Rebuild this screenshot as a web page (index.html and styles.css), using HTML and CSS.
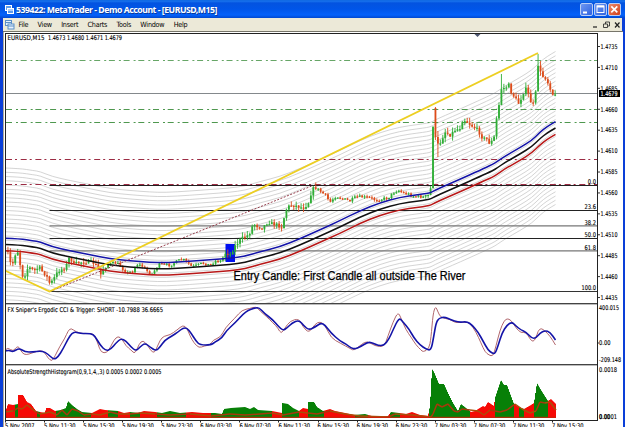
FILE: index.html
```
<!DOCTYPE html>
<html>
<head>
  <meta charset="UTF-8">
  <title>539422: MetaTrader - Demo Account - [EURUSD,M15]</title>
  <link rel="stylesheet" href="styles.css">
</head>
<body>
  <div class="window">
    <div class="titlebar">
      <svg class="app-icon" width="9" height="9" viewBox="0 0 9 9">
        <rect x="0.5" y="0.5" width="6" height="5" fill="#5e9bea" stroke="#fff"/>
        <rect x="2.5" y="3.5" width="6" height="5" fill="#5e9bea" stroke="#fff"/>
        <path d="M2 5h7" stroke="#fff"/>
      </svg>
      <span class="title">539422: MetaTrader - Demo Account - [EURUSD,M15]</span>
      <div class="win-buttons">
        <span class="btn"><svg width="13" height="13"><path d="M3 9.5h4" stroke="#fff" stroke-width="2"/></svg></span>
        <span class="btn"><svg width="13" height="13"><path d="M3 3.5h7" stroke="#fff" stroke-width="2"/><rect x="3" y="3" width="7" height="6.5" fill="none" stroke="#fff"/></svg></span>
        <span class="btn close"><svg width="13" height="13"><path d="M3.3 3.3l6 6M9.3 3.3l-6 6" stroke="#fff" stroke-width="1.7"/></svg></span>
      </div>
    </div>

    <div class="menubar">
      <svg class="doc-icon" width="10" height="10" viewBox="0 0 10 10">
        <rect x="0.5" y="0.5" width="6" height="5" fill="#e8f2ff" stroke="#5b8fc7"/>
        <rect x="3" y="4" width="6" height="5" fill="#e8f2ff" stroke="#5b8fc7"/>
        <path d="M1 2.5h5M3 6h6" stroke="#5b8fc7"/>
      </svg>
      <div class="menu">
        <span>File</span><span>View</span><span>Insert</span><span>Charts</span><span>Tools</span><span>Window</span><span>Help</span>
      </div>
      <svg class="mdi" width="32" height="12" viewBox="0 0 32 12">
        <path d="M3 8h4" stroke="#222" stroke-width="1.2"/>
        <path d="M15.5 5v-2h4v4h-1.500M13.500 5h4v3.500h-4z" stroke="#333" stroke-width="0.9" fill="none"/>
        <path d="M25 3.500l4.500 5M29.500 3.500l-4.500 5" stroke="#222" stroke-width="1.200"/>
      </svg>
    </div>

    <div class="client">
      <svg id="main" class="panel" width="618" height="271" viewBox="5 33 618 271"></svg>
      <svg id="cci" class="panel" width="618" height="61" viewBox="5 304 618 61"></svg>
      <svg id="hist" class="panel" width="618" height="56" viewBox="5 365 618 56"></svg>
      <svg id="times" class="panel" width="618" height="6" viewBox="5 421 618 6"></svg>
    </div>
  </div>
  <script src="chart.js"></script>
</body>
</html>
```
FILE: styles.css
```
body {
  margin: 0;
  background: #fff;
  font-family: "DejaVu Sans Condensed", "DejaVu Sans", sans-serif;
}

.window {
  display: flex;
  flex-direction: column;
  width: 625px;
  height: 427px;
  overflow: hidden;
  background: #0a3fd8;
}

.titlebar {
  display: flex;
  align-items: center;
  height: 18px;
  padding: 1px 4px 0 5px;
  box-sizing: border-box;
  background: linear-gradient(#0a62dc 0, #1a74ee 1px, #0353e0 3px, #0055e8 9px, #0461fa 15px, #0048d0 18px);
}

.title {
  margin-left: 2px;
  margin-top: 1px;
  color: #fff;
  font: bold 8.7px "Noto Sans", sans-serif;
  letter-spacing: -0.47px;
  white-space: nowrap;
  text-shadow: 1px 1px 0 #0a3a9c;
}

.win-buttons {
  display: flex;
  gap: 1px;
  margin-left: auto;
}

.btn {
  width: 11px;
  height: 11px;
  border: 1px solid #b9cdf5;
  border-radius: 2px;
  background: linear-gradient(135deg, #6d97f2, #2e62e0);
}

.btn svg {
  display: block;
  margin: -1px;
}

.close {
  background: linear-gradient(135deg, #ec8b6a, #d2401a);
}

.menubar {
  display: flex;
  align-items: center;
  height: 13px;
  margin: 0 3px 0 3px;
  padding-left: 2px;
  background: #ece9d8;
}

.menu {
  display: flex;
  gap: 9.3px;
  margin-left: 3.5px;
  font-size: 7.2px;
  letter-spacing: -0.25px;
  line-height: 12px;
  color: #000;
}

.mdi {
  margin-left: auto;
}

.client {
  display: flex;
  flex-direction: column;
  margin: 0 2px 0 3px;
  padding-top: 1px;
  padding-left: 2px;
  border-top: 1px solid #77756a;
  box-shadow: inset 1px 0 0 #aca899;
  background: #fff;
}

.panel {
  display: block;
  flex: none;
  overflow: hidden;
}

.small {
  font-size: 6.5px;
  fill: #000;
  stroke: #000;
  stroke-width: 0.12px;
}

.quote {
  fill: #fff;
  stroke: #fff;
}

.note {
  font: 12px "Liberation Sans", sans-serif;
  fill: #000;
  stroke: #000;
  stroke-width: 0.25px;
}
```
FILE: chart.js
```
const NS = "http://www.w3.org/2000/svg";
const main = document.getElementById("main");
const cci = document.getElementById("cci");
const hist = document.getElementById("hist");
const times = document.getElementById("times");

function el(parent, name, attrs, text) {
  const e = document.createElementNS(NS, name);
  for (const k in attrs) e.setAttribute(k, attrs[k]);
  if (text) e.textContent = text;
  parent.appendChild(e);
  return e;
}

function line(p, x1, y1, x2, y2, color, width, dash) {
  el(p, "path", { d: `M${x1} ${y1}L${x2} ${y2}`, stroke: color, "stroke-width": width || 1, "stroke-dasharray": dash || "none", fill: "none" });
}

function rect(p, x, y, w, h, color) {
  el(p, "rect", { x, y, width: w, height: h, fill: color });
}

function label(p, x, y, text, width, cls) {
  el(p, "text", { x, y, class: cls || "small", textLength: width, lengthAdjust: "spacingAndGlyphs" }, text);
}

// "x,y x,y" -> [[x, y], ...]
function pts(s) {
  return s.trim().split(/\s+/).map(p => p.split(",").map(Number));
}

function at(list, x) {
  if (x <= list[0][0]) return list[0][1];
  for (let i = 1; i < list.length; i++) {
    const [x0, y0] = list[i - 1], [x1, y1] = list[i];
    if (x <= x1) return y0 + (y1 - y0) * (x - x0) / (x1 - x0);
  }
  return list[list.length - 1][1];
}

function curve(p, list, dy, color, width) {
  let d = `M${list[0][0]} ${list[0][1] + dy}`;
  for (let i = 1; i < list.length - 1; i++) {
    const mx = (list[i][0] + list[i + 1][0]) / 2;
    const my = (list[i][1] + list[i + 1][1]) / 2 + dy;
    d += `Q${list[i][0]} ${list[i][1] + dy} ${mx} ${my}`;
  }
  const last = list[list.length - 1];
  d += `L${last[0]} ${last[1] + dy}`;
  el(p, "path", { d, stroke: color, "stroke-width": width, fill: "none" });
}

let seed = 7;
function rnd() {
  seed = (seed * 16807) % 2147483647;
  return seed / 2147483647;
}

const STEP = 2.443;

// moving average with its envelope
const ma = pts(`5,244.500 20,245 33,247 40,248 52,253 70,257 90,261 110,265 130,267 150,268.500 165,269 190,267.500
  210,266 230,264.500 245,262.500 260,258 280,253 300,245 320,236 340,227 360,217 380,209 400,203.500 418,201
  427,199.800 431,198.800 435,196.500 445,192 460,185.500 480,176.500 493,170.500 497,168 505,162.500 520,154 532,146.500
  540,138.500 547,133 555.500,128`);

for (let i = -18; i <= 18; i++) {
  if (i) curve(main, ma, i * 4.25, "#c2c2c2", 0.7);
}

// horizontal levels
line(main, 6, 60.500, 597, 60.500, "#67a667", 1, "6 4 2 2.700");
line(main, 6, 109.500, 597, 109.500, "#4f984f", 1, "6 4 2 2.700");
line(main, 6, 122.500, 597, 122.500, "#4f984f", 1, "6 4 2 2.700");
line(main, 6, 159.500, 597, 159.500, "#9c2c44", 1, "6 3 2 3.700");
line(main, 6, 184.500, 597, 184.500, "#9c2c44", 1, "6 3 2 3.700");
line(main, 6, 93.500, 597, 93.500, "#84898c");

const fibs = [["0.0", 185.500, "#222"], ["23.6", 210.500, "#222"], ["38.2", 225.800, "#777"],
  ["50.0", 238.500, "#222"], ["61.8", 250.800, "#777"], ["100.0", 291.500, "#333"]];
fibs.forEach(([name, y, color]) => {
  line(main, 49.500, y, 597, y, color, color === "#777" ? 1.2 : 1);
  const w = name.length * 3.2 - 1.4;
  label(main, 596 - w, y - 1.3, name, w);
});

// price candles
const price = pts(`5,252 8,253 11,265 14,262 16,250 19,253 21,273 24,278 27,269 30,268 33,270 36,270 39,267 42,271
  45,274 47,277 50,284 53,280 57,273 60,270 65,268 68,262 70,255 73,265 77,263 82,262 87,262 92,262 97,266 101,275
  104,268 109,264 115,263 118,264 122,268 127,273 133,271 137,264 142,266 147,271 152,274 157,267 160,264 165,265
  170,265 176,262 182,259 187,262 192,267 198,265 203,263 210,265 215,261 221,261 226,252 230,255 235,246 241,239
  247,236 251,231 253,224 257,226 262,228 268,222 273,224 280,226 282.500,228 285,211 290,205 297,206 303,208 308,204
  312,190 315,187 320,191 325,195 330,202 336,196 343,199 350,201 356,197 362,197 370,198 376,200 382,199 388,198
  393,193 398,190 403,193 408,194 413,196 424,197 429,195 431,187 433.500,127 436,137 438.500,147 441,141 445,132 450,135
  455,130 460,128 463,119 467,122 472,126 478,130 483,139 486,138 490,144 494,138 496,122 499,105 502,85 505,90 508,83
  511,92 515,98 519,104 523,93 526,89 530,98 532,108 535,98 537,82 538.500,58 541,76 545,77 549,85 552,92 554,98 556,94`);

rect(main, 225.500, 244, 9.500, 18, "#0010f0");

// highs and lows of the long candles
const wicks = { 175: [126, 188], 176: [107, 140], 177: [131, 157], 203: [74, 102], 218: [54, 84] };
let prev = price[0][1];
for (let i = 0; i <= 225; i++) {
  const x = 5.500 + i * STEP;
  const calm = x > 105 && x < 225 || x > 325 && x < 425;
  let c = at(price, x) + (rnd() - 0.5) * (calm ? 3 : 3.500);
  if (i === 175) c = 127;
  if (i === 176) {
    prev = 108;
    c = 137;
  }
  const color = c < prev ? "#2fae36" : "#dd4c1a";
  let hi = Math.min(c, prev) - rnd() * (calm ? 2 : 5);
  let lo = Math.max(c, prev) + rnd() * (calm ? 2 : 4.500);
  if (wicks[i]) [hi, lo] = wicks[i];
  line(main, x, hi, x, lo, color, 0.9);
  rect(main, x - 0.9, Math.min(c, prev), 1.8, Math.max(1.2, Math.abs(c - prev)), color);
  prev = c;
}

curve(main, ma, -6.3, "#1414a8", 1.5);
curve(main, ma, 0, "#111", 1.5);
curve(main, ma, 6.3, "#b81818", 1.5);

line(main, 50, 291.500, 313, 185.500, "#8a2a3a", 0.9, "2 1.500");
el(main, "path", { d: "M5 270.500L49.500 291.500L538 53", stroke: "#edcf22", "stroke-width": 1.8, fill: "none" });

el(main, "path", { d: "M474.500 34h6l-3 3z", fill: "#4c5670" });
label(main, 7.500, 40.400, "EURUSD,M15", 37);
label(main, 48, 40.400, "1.4673 1.4680 1.4671 1.4679", 74);
label(main, 233.500, 280, "Entry Candle: First Candle all outside The River", 232, "note");

for (let i = 0; i < 13; i++) {
  const y = 46.500 + i * 20.920;
  line(main, 597, y, 600, y, "#333");
  label(main, 600.500, y + 2.3, (1.4735 - i * 0.0025).toFixed(4), 17);
}
rect(main, 599, 90, 21, 7, "#000");
label(main, 600.500, 95.800, "1.4679", 17, "small quote");

// ergodic CCI
const trigger = pts(`5,351 9,350 13,352 19,348 25,352 33,352 40,351 45,352 50,356 54,359.500 58,357 63,349 68,339 72,333
  76,332 80,333.500 91,333.500 95,336 100,345 106,351 111,349 116,343 121,338.500 126,341 131,347 136,351 140,347 145,343
  150,347 156,351 160,347 165,340 172,336 178,332 183,328 187,328 191,333 196,341 200,345 211,345 215,342 222,338
  226,331 235,323 246,311 255,308 259,307.500 264,313 273,320 278,326 283,330.500 287,328 292,323 299,320 304,326
  309,330 315,327 321,323 325,325 331,333 340,341 346,344 351,348 355,349 360,347 368,342 373,343 378,345.500 384,345.500
  389,339 393,330 399,317.500 403,322 409,329 414,338 420,345 426,349 431,350.500 433.500,338 436,323 439,318 445,317 450,319.500
  459,322.500 467,321.500 472,325 478,332 483,341 488,350 492,353 495,354 498,346 502,333 507,325 512,322 516,326 521,330
  526,332 532,338.500 536,338 540,333 545,330.500 550,332 555.500,340`);
const fast = pts(`5,350 8,347 13,352 18,345 22,353 26,355 32,353 41,350 45,353 48,358 52,361.500 55,356 60,346 65,338 68,331
  71,328 76,332 84,334 91,333 95,336 98,344 101,352.500 107,353 111,346 114,340 118,336 122,339 126,346 131,350 135,354
  139,344 143,340 148,346 153,353.500 156,350 160,340 164,336 170,335 177,330 183,325 187,328 190,336 194,343 199,348
  204,346 210,345 213,340 221,337 225,328 235,318 242,310 250,308.500 256,306.500 260,311 266,316 273,323 278,328
  281,334 285,328 290,321 299,318.500 303,327 309,333 315,324 320,321.500 325,325 331,338 340,343 351,349 354,350.500
  362,344 367,341 375,346 384,347 388,336 393,322 398,312 401,318 406,330 411,337 416,345 421,350 423,352 429,349
  431,338 433,314 435.500,306 438,312 441,318 450,319 455,323 465,322 470,323 476,332 481,343 485,352 489,355 493,356.500
  496,346 500,330 504,321 507,318.500 511,320 516,328 521,333 526,332 530,339 533,342 536,338 538,331 541,328 545,331
  550,336 555.500,345`);
curve(cci, fast, 0, "#a8565c", 0.9);
curve(cci, trigger, 0, "#1414a8", 1.6);
label(cci, 7.500, 311.800, "FX Sniper's Ergodic CCI & Trigger: SHORT -10.7988 36.6665", 155.500);
label(cci, 599, 310.200, "400.015", 20);
label(cci, 599, 345.400, "0.00", 11.500);
label(cci, 599, 362.300, "-209.148", 22);
line(cci, 597, 343, 599, 343, "#333");

// strength histogram
const tops = pts(`5,413 8,404 13,405 18,404 18.500,395 23,395 27,402 31,404 36,411 40,412 45,413 46,408 50,408 55,411
  61,410 66,408 68,401 72,405 77,409 82,412 92,413 100,409 105,410 118,411 124,413 130,412 138,413 144,411 155,412
  162,413 170,411 180,413 192,412 203,413 215,413 222,414 224,409 231,408 245,407 250,409 254,407 258,410 272,411
  282,413 282.500,403 288,404 293,408 299,411 303,408 308,409 308.500,402 314,402 317,407 323,411 330,409 335,411
  345,413 354,415 365,414 375,417 388,416 391,412 399,413 406,414 412,412 420,415 428,416 430,406 432,369 434,372
  439,384 444,384 448,393 453,403 458,411 461,404 466,408 471,412 475,411 483,406 485,407 488,402 494,406 495,398
  501,380 504,385 507,385 511,396 514,404 519,407 524,409 531,405 534,403 537,383 541,390 548,401 551,399 553,401 556,404`);
// [end x, colour]
const runs = [[15, "r"], [18, "g"], [37, "r"], [40, "g"], [56, "r"], [91, "g"], [108, "r"], [118, "g"], [130, "r"],
  [140, "g"], [157, "r"], [186, "g"], [211, "r"], [272, "g"], [281.500, "r"], [299, "g"], [308, "r"], [324, "g"],
  [355, "r"], [368, "g"], [390, "r"], [400, "g"], [429, "r"], [470, "g"], [495, "r"], [514, "g"], [519, "r"],
  [524, "g"], [534, "r"], [547.500, "g"], [560, "r"]];
const base = 418;
for (let x = 5; x < 556; x++) {
  const run = runs.find(r => x < r[0]);
  const y = at(tops, x + 0.5);
  rect(hist, x, y, 1, base - y, run[1] === "r" ? "#f60a05" : "#078007");
}
const weak = pts(`5,412 13,411 18,408 22,409 27,405 31,408 36,412 40,414 50,412 57,415 62,410 67,415 72,409 78,411 84,415
  92,414 100,415 110,412 118,414 130,414 140,413 155,414 170,415 190,414 211,416 230,414 245,415 260,414 272,413
  283,415 299,412 308,413 317,414 330,411 345,414 360,416 388,417 395,414 412,415 431,417 433,414 437,404 442,407
  448,404 454,411 458,412 462,409 470,410 478,411 484,415 490,410 500,412 507,410 515,404 522,409 530,413 536,411
  540,402 545,403 550,402 556,410`);
for (let i = 1; i < weak.length; i++) {
  const [x0, y0] = weak[i - 1], [x1, y1] = weak[i];
  const run = runs.find(r => (x0 + x1) / 2 < r[0]);
  line(hist, x0, y0, x1, y1, run[1] === "r" ? "#a8500a" : "#a8380c", 1.5);
}
line(hist, 5, 417.300, 556, 417.300, "#c8240c", 1);
label(hist, 7.500, 373.800, "AbsoluteStrengthHistogram(0,9,1,4,,3) 0.0005 0.0002 0.0005", 154);
label(hist, 599, 372.200, "0.0018", 18);
label(hist, 599, 418.700, "0.0001", 18);
label(hist, 599, 419.300, "0.00", 11);

// frame
rect(main, 5, 33, 593, 1, "#222");
rect(main, 5, 303, 593, 1, "#444");
rect(cci, 5, 304, 593, 0.5, "#777");
rect(cci, 5, 364, 593, 1, "#444");
rect(hist, 5, 365, 593, 0.5, "#777");
rect(hist, 5, 420, 593, 1, "#222");
[[main, 33, 271], [cci, 304, 61], [hist, 365, 56]].forEach(([p, y, h]) => {
  rect(p, 5, y, 1, h, "#222");
  rect(p, 597, y, 1, h, "#222");
});

["5 Nov 2007", "5 Nov 11:30", "5 Nov 15:30", "5 Nov 19:30", "5 Nov 23:30", "6 Nov 03:30", "6 Nov 07:30", "6 Nov 11:30",
  "6 Nov 15:30", "6 Nov 19:30", "6 Nov 23:30", "7 Nov 03:30", "7 Nov 07:30", "7 Nov 11:30", "7 Nov 15:30"].forEach((t, i) => {
  const x = 5 + i * 39.070;
  rect(times, Math.round(x), 421, 1, 1.5, "#222");
  label(times, x, 428.300, t, i ? 31.500 : 29.500);
});
```
